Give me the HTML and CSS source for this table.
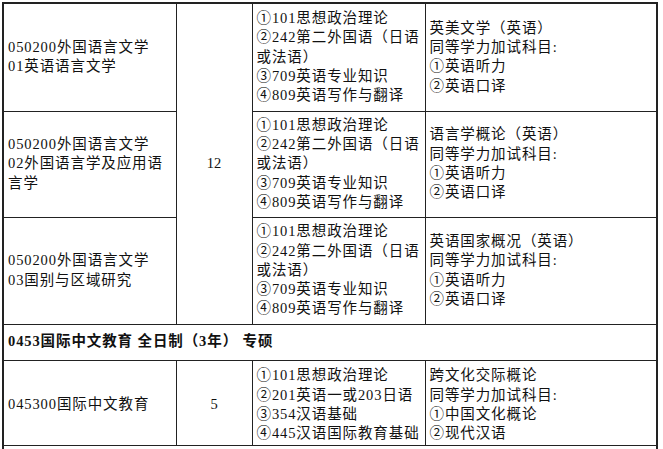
FILE: index.html
```html
<!DOCTYPE html>
<html lang="zh-CN">
<head>
<meta charset="utf-8">
<title>招生专业目录</title>
<link rel="stylesheet" href="styles.css">
</head>
<body>
<div class="wrap">
<table class="catalog">
  <colgroup>
    <col class="c-major">
    <col class="c-num">
    <col class="c-exam">
    <col class="c-extra">
  </colgroup>
  <tbody>
    <tr class="r1">
      <td class="major">050200外国语言文学<br>01英语语言文学</td>
      <td class="num" rowspan="3">12</td>
      <td class="exam">
        <div>①101思想政治理论</div>
        <div>②242第二外国语（日语或法语）</div>
        <div>③709英语专业知识</div>
        <div>④809英语写作与翻译</div>
      </td>
      <td class="extra">
        <div>英美文学（英语）</div>
        <div>同等学力加试科目:</div>
        <div>①英语听力</div>
        <div>②英语口译</div>
      </td>
    </tr>
    <tr class="r2">
      <td class="major">050200外国语言文学<br>02外国语言学及应用语言学</td>
      <td class="exam">
        <div>①101思想政治理论</div>
        <div>②242第二外国语（日语或法语）</div>
        <div>③709英语专业知识</div>
        <div>④809英语写作与翻译</div>
      </td>
      <td class="extra">
        <div>语言学概论（英语）</div>
        <div>同等学力加试科目:</div>
        <div>①英语听力</div>
        <div>②英语口译</div>
      </td>
    </tr>
    <tr class="r3">
      <td class="major">050200外国语言文学<br>03国别与区域研究</td>
      <td class="exam">
        <div>①101思想政治理论</div>
        <div>②242第二外国语（日语或法语）</div>
        <div>③709英语专业知识</div>
        <div>④809英语写作与翻译</div>
      </td>
      <td class="extra">
        <div>英语国家概况（英语）</div>
        <div>同等学力加试科目:</div>
        <div>①英语听力</div>
        <div>②英语口译</div>
      </td>
    </tr>
    <tr class="sec">
      <td class="section" colspan="4">0453国际中文教育 全日制（3年） 专硕</td>
    </tr>
    <tr class="r4">
      <td class="major">045300国际中文教育</td>
      <td class="num">5</td>
      <td class="exam">
        <div>①101思想政治理论</div>
        <div>②201英语一或203日语</div>
        <div>③354汉语基础</div>
        <div>④445汉语国际教育基础</div>
      </td>
      <td class="extra">
        <div>跨文化交际概论</div>
        <div>同等学力加试科目:</div>
        <div>①中国文化概论</div>
        <div>②现代汉语</div>
      </td>
    </tr>
    <tr class="r5">
      <td class="section" colspan="4">&nbsp;</td>
    </tr>
  </tbody>
</table>
</div>
</body>
</html>
```

FILE: styles.css
```css
html, body {
  margin: 0;
  padding: 0;
  background: #ffffff;
}

.wrap {
  padding: 2px 0 0 2px;
}

.catalog {
  border-collapse: collapse;
  table-layout: fixed;
  width: 654px;
  border: 2px solid #222;
  font-family: "Liberation Serif", "Noto Sans CJK SC", serif;
  font-size: 14.5px;
  line-height: 19.3px;
  letter-spacing: 0.9px;
  color: #111;
}

.c-major { width: 173px; }
.c-num { width: 76px; }
.c-exam { width: 173px; }
.c-extra { width: 232px; }

.catalog td {
  border: 1px solid #222;
  padding: 0 4px;
  vertical-align: middle;
  text-align: left;
}

.catalog td.num {
  text-align: center;
  letter-spacing: 0;
}

.r1 { height: 108px; }
.r2 { height: 106px; }
.r3 { height: 107px; }
.sec { height: 36px; }
.r4 { height: 85px; }
.r5 { height: 30px; }

.r4 td {
  padding-top: 5px;
}

.catalog td.section {
  font-weight: bold;
  padding-left: 4px;
}
```
